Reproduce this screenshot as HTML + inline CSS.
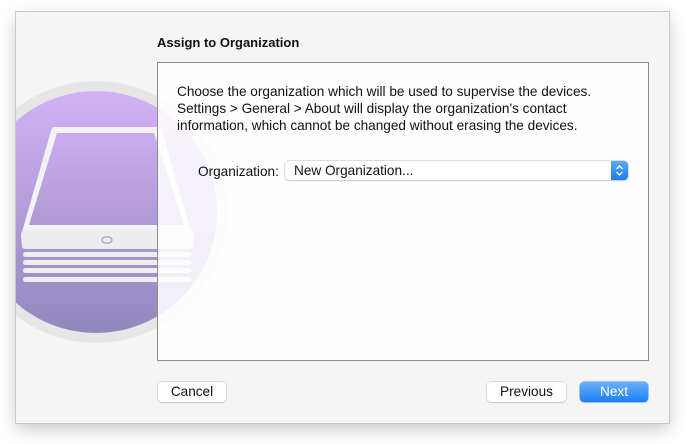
<!DOCTYPE html>
<html><head><meta charset="utf-8"><style>
body{margin:0;width:686px;height:444px;background:#fff;position:relative;overflow:hidden;font-family:"Liberation Sans",sans-serif;}
.win{position:absolute;left:16px;top:12px;width:653px;height:411px;background:#f5f5f5;box-shadow:0 0 0 1px #c8c8c8,0 6px 16px rgba(0,0,0,.22);overflow:hidden;}
.title{position:absolute;left:157px;top:35px;font-weight:bold;font-size:13px;color:#111;}
.panel{position:absolute;left:157px;top:62px;width:490px;height:297px;border:1px solid #8e8e8e;background:rgba(255,255,255,.86);}
.txt{position:absolute;left:177px;top:83px;font-size:13.6px;line-height:17px;color:#111;white-space:nowrap;}
.lbl{position:absolute;left:198px;top:164px;font-size:13.6px;color:#111;}
.sel{position:absolute;left:285px;top:161px;width:343px;height:19px;background:#fff;border-radius:4px;box-shadow:0 0 0 .5px #bbb,0 1px 1px rgba(0,0,0,.15);font-size:13.6px;line-height:19px;}
.sel span{position:absolute;left:9px;top:0;color:#111}
.sel .arr{position:absolute;right:0;top:0;width:17px;height:19px;background:linear-gradient(#5ca9fb,#1a7cf5);border-radius:0 4px 4px 0;}
.btn{position:absolute;top:382px;height:20px;background:#fff;border-radius:4px;box-shadow:0 0 0 .5px #c0c0c0,0 1px 1px rgba(0,0,0,.15);font-size:13.6px;line-height:20px;text-align:center;color:#111;}
</style></head><body>
<div class="win">
<svg width="653" height="411" style="position:absolute;left:0;top:0">
<defs><linearGradient id="g" x1="0" y1="0" x2="0" y2="1"><stop offset="0" stop-color="#d3b1f7"/><stop offset="1" stop-color="#9287bd"/></linearGradient></defs>
<circle cx="80" cy="200" r="131" fill="#e6e6e6"/>
<circle cx="80" cy="200" r="121" fill="url(#g)"/>
<path d="M38 115 L141 115 Q145 115 146 119 L175 220 L6 220 L35 119 Q36 115 38 115Z" fill="#f3f3f3"/>
<path d="M41 121 L138 121 L168 213 L13 213Z" fill="url(#g)"/>
<path d="M41 121 L138 121 L168 213 L13 213Z" fill="#c7a8ea" opacity=".55"/>
<path d="M8 218 L176 218 Q178 219 178 224 L177 234 Q176 237 172 237 L10 237 Q6 237 6 234 L5 224 Q5 219 8 218Z" fill="#ededed"/>
<ellipse cx="91" cy="228" rx="5" ry="3.3" fill="none" stroke="#9d8fc7" stroke-width="1"/>
<rect x="7" y="240" width="168" height="5" rx="2.5" fill="#eeeeee"/>
<rect x="7" y="248" width="168" height="5" rx="2.5" fill="#eeeeee"/>
<rect x="7" y="256" width="168" height="5" rx="2.5" fill="#eeeeee"/>
<rect x="7" y="265" width="168" height="5" rx="2.5" fill="#eeeeee"/>
</svg>
</div>
<div class="title">Assign to Organization</div>
<div class="panel"></div>
<div class="txt">Choose the organization which will be used to supervise the devices.<br>Settings &gt; General &gt; About will display the organization's contact<br>information, which cannot be changed without erasing the devices.</div>
<div class="lbl">Organization:</div>
<div class="sel"><span>New Organization...</span><div class="arr"><svg width="17" height="19"><path d="M5.5 8 L8.5 5 L11.5 8 M5.5 11 L8.5 14 L11.5 11" fill="none" stroke="#fff" stroke-width="1.3"/></svg></div></div>
<div class="btn" style="left:158px;width:68px">Cancel</div>
<div class="btn" style="left:487px;width:79px">Previous</div>
<div class="btn" style="left:580px;width:68px;background:linear-gradient(#68b1fb,#1d7ff5);color:#fff;box-shadow:0 0 0 .5px #3d8ef0">Next</div>
</body></html>
